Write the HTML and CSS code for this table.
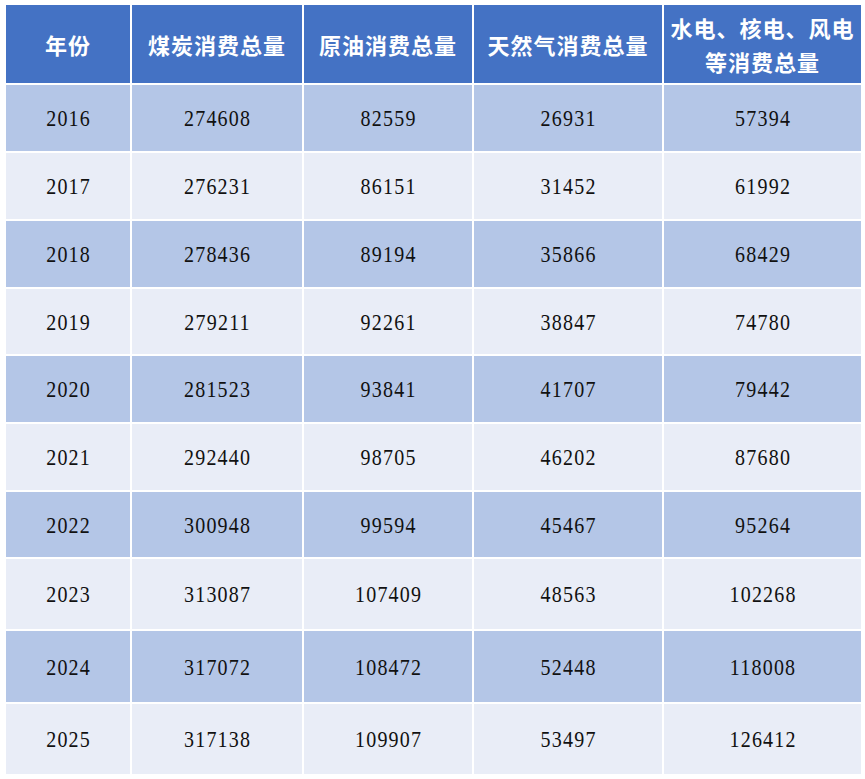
FILE: index.html
```html
<!DOCTYPE html>
<html lang="zh-CN">
<head>
<meta charset="utf-8">
<title>能源消费总量</title>
<link rel="stylesheet" href="styles.css">
</head>
<body>
<table class="energy">
  <colgroup>
    <col class="c1"><col class="c2"><col class="c3"><col class="c4"><col class="c5">
  </colgroup>
  <thead>
    <tr class="head">
      <th>年份</th>
      <th>煤炭消费总量</th>
      <th>原油消费总量</th>
      <th>天然气消费总量</th>
      <th>水电、核电、风电<br>等消费总量</th>
    </tr>
  </thead>
  <tbody>
    <tr class="dark h66"><td><span class="n">2016</span></td><td><span class="n">274608</span></td><td><span class="n">82559</span></td><td><span class="n">26931</span></td><td><span class="n">57394</span></td></tr>
    <tr class="light h66"><td><span class="n">2017</span></td><td><span class="n">276231</span></td><td><span class="n">86151</span></td><td><span class="n">31452</span></td><td><span class="n">61992</span></td></tr>
    <tr class="dark h66"><td><span class="n">2018</span></td><td><span class="n">278436</span></td><td><span class="n">89194</span></td><td><span class="n">35866</span></td><td><span class="n">68429</span></td></tr>
    <tr class="light h65"><td><span class="n">2019</span></td><td><span class="n">279211</span></td><td><span class="n">92261</span></td><td><span class="n">38847</span></td><td><span class="n">74780</span></td></tr>
    <tr class="dark h66"><td><span class="n">2020</span></td><td><span class="n">281523</span></td><td><span class="n">93841</span></td><td><span class="n">41707</span></td><td><span class="n">79442</span></td></tr>
    <tr class="light h66"><td><span class="n">2021</span></td><td><span class="n">292440</span></td><td><span class="n">98705</span></td><td><span class="n">46202</span></td><td><span class="n">87680</span></td></tr>
    <tr class="dark h65"><td><span class="n">2022</span></td><td><span class="n">300948</span></td><td><span class="n">99594</span></td><td><span class="n">45467</span></td><td><span class="n">95264</span></td></tr>
    <tr class="light h70"><td><span class="n">2023</span></td><td><span class="n">313087</span></td><td><span class="n">107409</span></td><td><span class="n">48563</span></td><td><span class="n">102268</span></td></tr>
    <tr class="dark h71"><td><span class="n">2024</span></td><td><span class="n">317072</span></td><td><span class="n">108472</span></td><td><span class="n">52448</span></td><td><span class="n">118008</span></td></tr>
    <tr class="light h70"><td><span class="n">2025</span></td><td><span class="n">317138</span></td><td><span class="n">109907</span></td><td><span class="n">53497</span></td><td><span class="n">126412</span></td></tr>
  </tbody>
</table>
</body>
</html>
```
FILE: styles.css
```css
html, body {
  margin: 0;
  padding: 0;
  background: #ffffff;
}

.energy {
  margin: 3px 0 0 4px;
  border-collapse: separate;
  border-spacing: 2px;
  table-layout: fixed;
  width: 859px;
}

.c1 { width: 124px; }
.c2 { width: 170px; }
.c3 { width: 168px; }
.c4 { width: 188px; }
.c5 { width: 197px; }

.energy th,
.energy td {
  padding: 0;
  text-align: center;
  vertical-align: middle;
}

.head th {
  height: 78px;
  background: #4472c4;
  color: #ffffff;
  font-family: "Noto Sans CJK SC", "Noto Sans", sans-serif;
  font-weight: 700;
  font-size: 22px;
  line-height: 34px;
  letter-spacing: 1px;
  white-space: nowrap;
}

.energy td {
  font-family: "Liberation Serif", "Times New Roman", serif;
  font-size: 20px;
  line-height: 24px;
  color: #111111;
}

.n {
  display: inline-block;
  letter-spacing: 1.2px;
  margin-right: -1.2px;
  transform: scaleY(1.2);
}

.dark td { background: #b4c6e7; }
.light td { background: #e9edf7; }

.h65 td { height: 65px; }
.h66 td { height: 66px; }
.h70 td { height: 70px; }
.h71 td { height: 71px; }
```
